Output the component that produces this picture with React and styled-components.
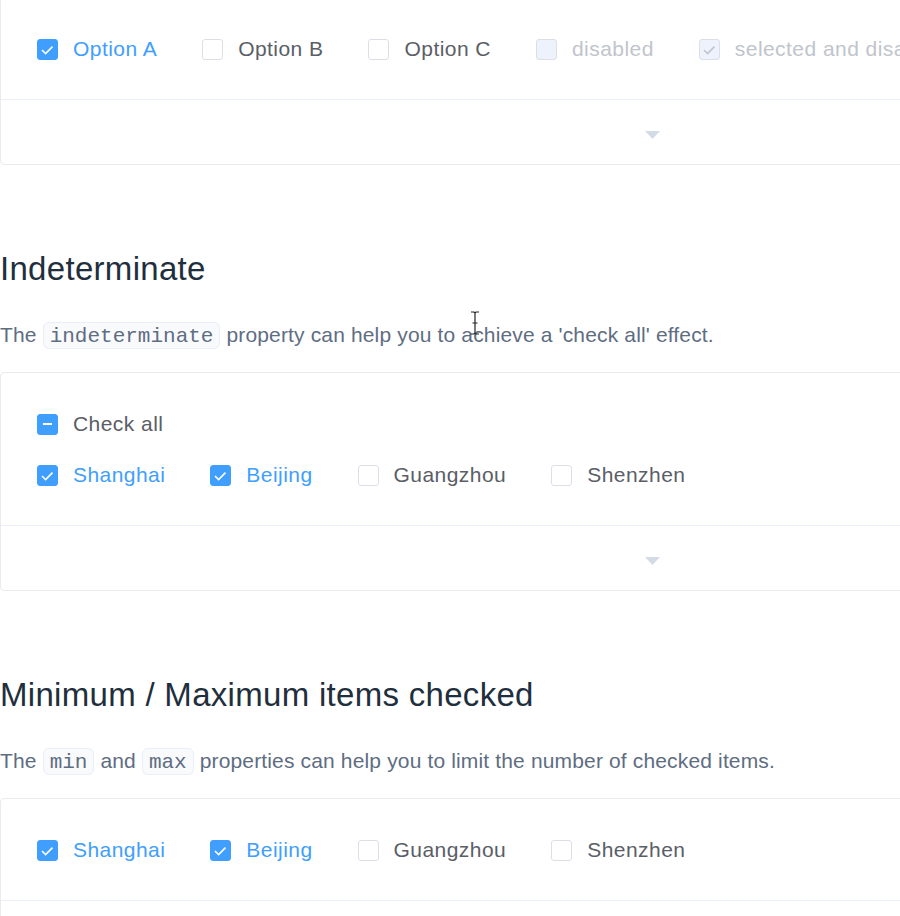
import React from "react";
import styled, { createGlobalStyle } from "styled-components";

const GlobalStyle = createGlobalStyle`
  html, body {
    margin: 0;
    padding: 0;
    background: #fff;
    overflow: hidden;
  }
  body {
    font-family: "Liberation Sans", Arial, sans-serif;
    -webkit-font-smoothing: antialiased;
  }
`;

const Page = styled.div`
  position: relative;
  width: 1304px;
  margin-top: -3px;
`;

const Heading = styled.h3`
  margin: 84px 0 0;
  font-size: 33px;
  line-height: 40px;
  font-weight: 400;
  letter-spacing: 0.3px;
  color: #1f2f3d;
`;

const Text = styled.p`
  margin: 30px 0 19px;
  font-size: 21px;
  line-height: 32px;
  letter-spacing: 0.15px;
  color: #5e6d82;
`;

const Code = styled.code`
  font-family: "Liberation Mono", "DejaVu Sans Mono", monospace;
  font-size: 21px;
  letter-spacing: 0;
  background: #f9fafc;
  border: 1px solid #eaeefb;
  border-radius: 6px;
  padding: 2px 6px 0;
`;

const Block = styled.div`
  border: 1px solid #ebebeb;
  border-radius: 4px;
`;

const Source = styled.div`
  padding: 37px 36px 36px;
  display: flex;
  flex-direction: column;
  gap: 23px;
`;

const Group = styled.div`
  display: flex;
  align-items: center;
  height: 28px;
`;

const Item = styled.label`
  display: inline-flex;
  align-items: center;
  margin-right: 45px;
  cursor: ${({ $disabled }) => ($disabled ? "not-allowed" : "pointer")};
  white-space: nowrap;
`;

const Box = styled.span`
  position: relative;
  box-sizing: border-box;
  width: 21px;
  height: 21px;
  flex: none;
  border-radius: 3px;
  border: 1px solid ${({ $on, $disabled }) => ($on && !$disabled ? "#409eff" : "#dcdfe6")};
  background: ${({ $on, $disabled }) =>
    $disabled ? "#edf2fc" : $on ? "#409eff" : "#fff"};
  display: flex;
  align-items: center;
  justify-content: center;
`;

const Dash = styled.span`
  width: 9px;
  height: 2px;
  background: #fff;
`;

const Label = styled.span`
  padding-left: 15px;
  font-size: 21px;
  line-height: 28px;
  letter-spacing: 0.45px;
  color: ${({ $on, $disabled }) =>
    $disabled ? "#c0c4cc" : $on ? "#409eff" : "#5a5e66"};
`;

const Control = styled.div`
  box-sizing: border-box;
  height: 65px;
  padding-top: 5px;
  border-top: 1px solid #eaeefb;
  display: flex;
  align-items: center;
  justify-content: center;
`;

const Cursor = styled.svg`
  position: absolute;
  left: 469px;
  top: 314px;
`;

const Checkbox = ({ label, checked, indeterminate, disabled }) => {
  const on = checked || indeterminate;
  return (
    <Item $disabled={disabled}>
      <Box $on={on} $disabled={disabled}>
        {indeterminate && <Dash />}
        {checked && (
          <svg width="21" height="21" viewBox="0 0 21 21" style={{ position: "absolute", left: -1, top: -1 }}>
            <polyline
              points="5,11 8.6,14.6 15.5,7.6"
              fill="none"
              stroke={disabled ? "#c0c4cc" : "#fff"}
              strokeWidth="1.6"
            />
          </svg>
        )}
      </Box>
      <Label $on={on && !indeterminate} $disabled={disabled}>
        {label}
      </Label>
    </Item>
  );
};

const Caret = () => (
  <svg width="15" height="8" viewBox="0 0 15 8">
    <polygon points="0,0 15,0 7.5,8" fill="#d3dce6" />
  </svg>
);

const cities = ["Shanghai", "Beijing", "Guangzhou", "Shenzhen"];
const picked = ["Shanghai", "Beijing"];

const CityGroup = () => (
  <Group>
    {cities.map((c) => (
      <Checkbox key={c} label={c} checked={picked.includes(c)} />
    ))}
  </Group>
);

export default function App() {
  return (
    <Page>
      <GlobalStyle />
      <Block>
        <Source>
          <Group>
            <Checkbox label="Option A" checked />
            <Checkbox label="Option B" />
            <Checkbox label="Option C" />
            <Checkbox label="disabled" disabled />
            <Checkbox label="selected and disabled" checked disabled />
          </Group>
        </Source>
        <Control>
          <Caret />
        </Control>
      </Block>

      <Heading>Indeterminate</Heading>
      <Text>
        The <Code>indeterminate</Code> property can help you to achieve a 'check all' effect.
      </Text>
      <Block>
        <Source>
          <Group>
            <Checkbox label="Check all" indeterminate />
          </Group>
          <CityGroup />
        </Source>
        <Control>
          <Caret />
        </Control>
      </Block>

      <Heading>Minimum / Maximum items checked</Heading>
      <Text>
        The <Code>min</Code> and <Code>max</Code> properties can help you to limit the number of checked items.
      </Text>
      <Block>
        <Source>
          <CityGroup />
        </Source>
        <Control>
          <Caret />
        </Control>
      </Block>

      <Cursor width="12" height="24" viewBox="0 0 12 24">
        <path d="M2 1 H5 L6 2 L7 1 H10 M6 2 V22 M2 23 H5 L6 22 L7 23 H10 M3.5 12 H8.5" fill="none" stroke="#222" strokeWidth="1.2" />
      </Cursor>
    </Page>
  );
}
